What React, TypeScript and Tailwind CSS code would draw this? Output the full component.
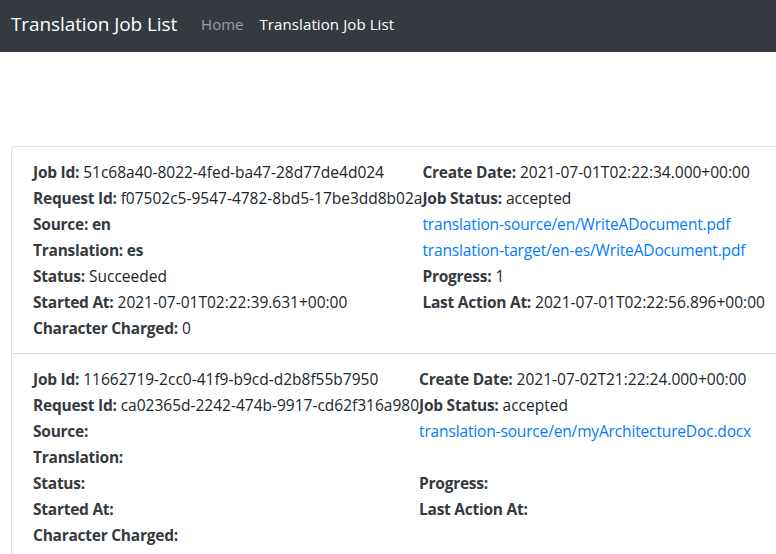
import React from "react";

type Row = { label?: string; value?: string; link?: string; boldValue?: boolean };

const jobs: { left: Row[]; right: Row[] }[] = [
  {
    left: [
      { label: "Job Id:", value: "51c68a40-8022-4fed-ba47-28d77de4d024" },
      { label: "Request Id:", value: "f07502c5-9547-4782-8bd5-17be3dd8b02a" },
      { label: "Source:", value: "en", boldValue: true },
      { label: "Translation:", value: "es", boldValue: true },
      { label: "Status:", value: "Succeeded" },
      { label: "Started At:", value: "2021-07-01T02:22:39.631+00:00" },
      { label: "Character Charged:", value: "0" },
    ],
    right: [
      { label: "Create Date:", value: "2021-07-01T02:22:34.000+00:00" },
      { label: "Job Status:", value: "accepted" },
      { link: "translation-source/en/WriteADocument.pdf" },
      { link: "translation-target/en-es/WriteADocument.pdf" },
      { label: "Progress:", value: "1" },
      { label: "Last Action At:", value: "2021-07-01T02:22:56.896+00:00" },
      {},
    ],
  },
  {
    left: [
      { label: "Job Id:", value: "11662719-2cc0-41f9-b9cd-d2b8f55b7950" },
      { label: "Request Id:", value: "ca02365d-2242-474b-9917-cd62f316a980" },
      { label: "Source:" },
      { label: "Translation:" },
      { label: "Status:" },
      { label: "Started At:" },
      { label: "Character Charged:" },
    ],
    right: [
      { label: "Create Date:", value: "2021-07-02T21:22:24.000+00:00" },
      { label: "Job Status:", value: "accepted" },
      { link: "translation-source/en/myArchitectureDoc.docx" },
      {},
      { label: "Progress:" },
      { label: "Last Action At:" },
      {},
    ],
  },
];

function Line({ r }: { r: Row }) {
  if (r.link) {
    return (
      <div className="h-[26px] leading-[26px] whitespace-nowrap">
        <a className="text-[#007bff] tracking-[-0.15px]">{r.link}</a>
      </div>
    );
  }
  return (
    <div className="h-[26px] leading-[26px] whitespace-nowrap">
      {r.label && (
        <span className="font-bold text-[#343a40] tracking-[-0.25px]">{r.label}</span>
      )}
      {r.value && (
        <span className={r.boldValue ? "font-bold text-[#343a40] tracking-[-0.25px]" : ""}>
          {" "}
          {r.value}
        </span>
      )}
    </div>
  );
}

export default function App() {
  return (
    <div
      className="w-[776px] h-[554px] overflow-hidden bg-white text-[#212529] text-[15.5px]"
      style={{ fontFamily: '"Open Sans", "Noto Sans", sans-serif' }}
    >
      <nav className="h-[52px] bg-[#343a40] flex items-center px-[11px] pb-[4px]">
        <span className="text-white text-[19px] mr-[24px] tracking-[-0.1px]">Translation Job List</span>
        <span className="text-white/50 text-[15px] mr-[16px]">Home</span>
        <span className="text-white text-[15px] tracking-[0.1px]">Translation Job List</span>
      </nav>
      <div className="pt-[94px] pl-[11px]">
        <div className="w-[800px] border border-[#dfdfdf] rounded-[4px]">
          {jobs.map((j, i) => (
            <div
              key={i}
              className={`flex px-[21px] py-[12px] ${i > 0 ? "border-t border-[#dfdfdf]" : ""}`}
            >
              <div>
                {j.left.map((r, k) => (
                  <Line key={k} r={r} />
                ))}
              </div>
              <div>
                {j.right.map((r, k) => (
                  <Line key={k} r={r} />
                ))}
              </div>
            </div>
          ))}
        </div>
      </div>
    </div>
  );
}
